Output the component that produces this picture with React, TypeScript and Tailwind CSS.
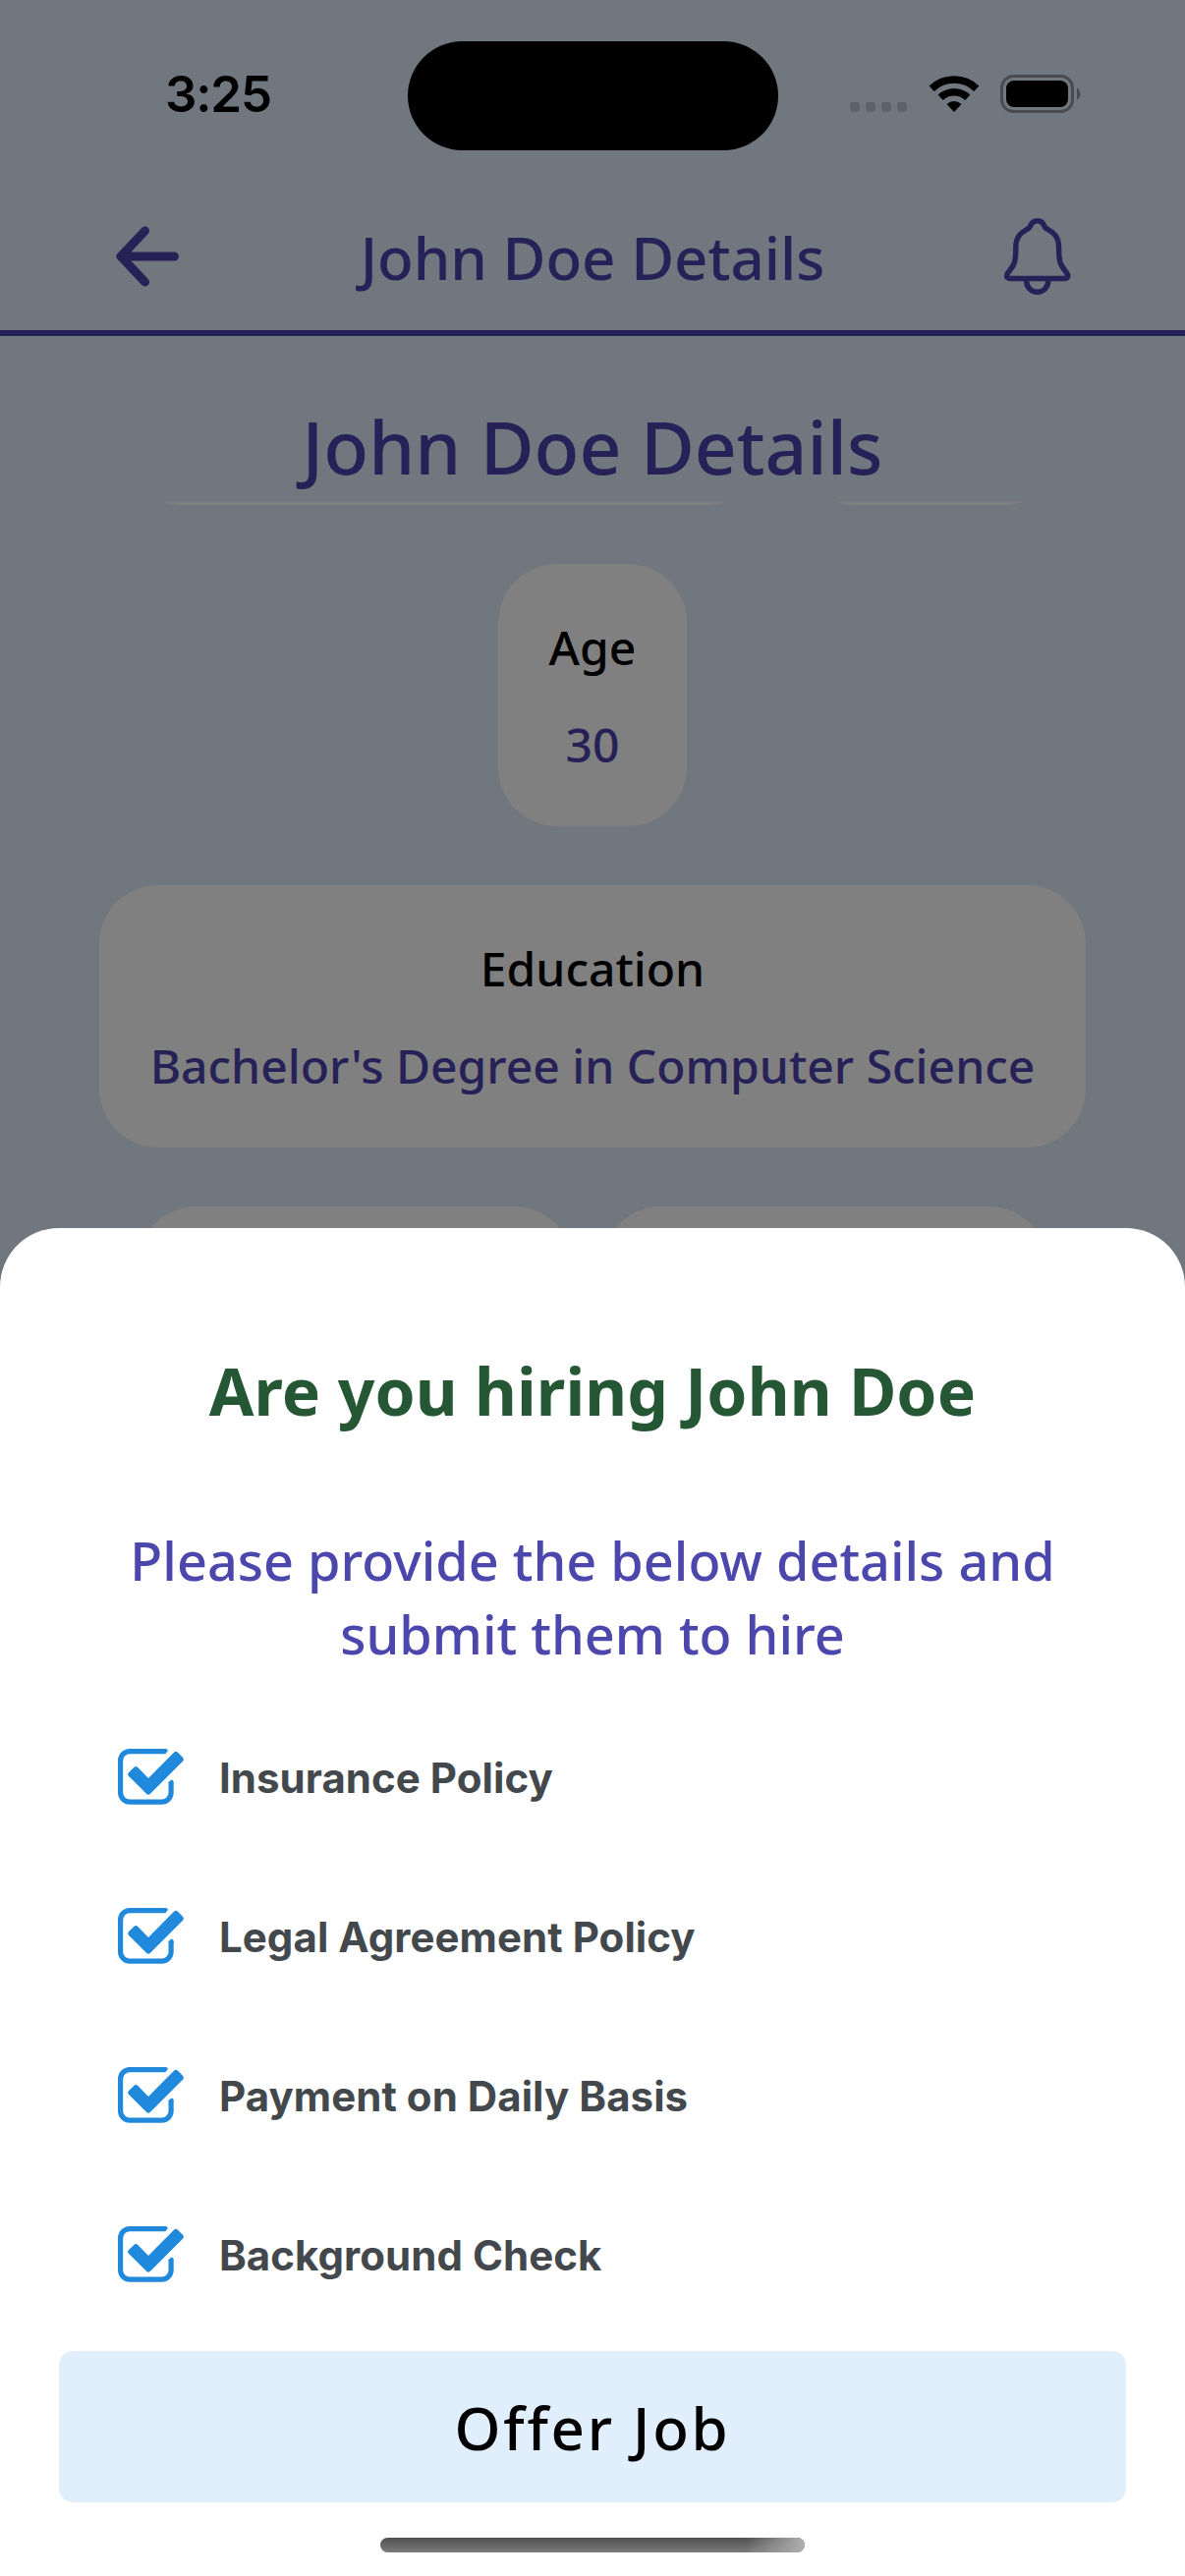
const checks = ["Insurance Policy", "Legal Agreement Policy", "Payment on Daily Basis", "Background Check"];

function CheckIcon() {
  return (
    <svg width="68" height="58" viewBox="0 0 68 58" className="shrink-0">
      <path d="M48.500 2.700H12A9.400 9.400 0 0 0 2.600 12.100V44.700A9.400 9.400 0 0 0 12 54.100H44.700A9.400 9.400 0 0 0 54.100 44.700V34" fill="none" stroke="#2089dc" strokeWidth="5.200" />
      <path d="M48 0.100Q51 0.200 50.800 2.200L48 5.300ZM51.500 35V34L54.500 31.500Q56.700 31.500 56.700 34V35Z" fill="#2089dc" />
      <path d="M10.900 24.200L16.300 19Q18.300 17.200 20.300 19L31 30L57 3.700Q59 2 61 3.700L66 8.700Q67.800 10.700 66 12.700L33 45.700Q31 47.600 29 45.700L10.900 27.800Q9.200 26 10.900 24.200Z" fill="#2089dc" />
    </svg>
  );
}

function InfoCard({ label, value }: { label: string; value: string }) {
  return (
    <div className="flex h-[267px] flex-col items-center rounded-[60px] bg-[#808080] px-[52px] pt-[35px] text-[48px] font-medium leading-[99px]">
      <div className="text-black">{label}</div>
      <div>{value}</div>
    </div>
  );
}

export default function App() {
  return (
    <div className="relative flex h-[2622px] w-[1206px] flex-col overflow-hidden bg-[#71777f] font-['Noto_Sans',sans-serif] text-[#262157]">
      <div className="flex h-[194px] items-start">
        <div className="mt-[65px] w-[415px] pl-[168px] font-['Inter',sans-serif] text-[51px] font-semibold leading-[62px] tracking-[-1.2px] text-black">3:25</div>
        <div className="mt-[41.500px] h-[111px] w-[377px] rounded-full bg-black" />
        <div className="ml-[73px] mt-[104px] flex gap-[6px]">
          {[0, 1, 2, 3].map((i) => <div key={i} className="h-[10px] w-[10px] rounded-[3px] bg-[#5e636b]" />)}
        </div>
        <svg width="52" height="38" viewBox="0 0 52 38" className="ml-[22px] mt-[77px]">
          <g fill="none" stroke="black" strokeWidth="7.500">
            <path d="M3.200 13.200A33 33 0 0 1 48.800 13.200" />
            <path d="M12.200 22.300A20 20 0 0 1 39.800 22.300" />
          </g>
          <path d="M18.500 29A11 11 0 0 1 33.500 29L26 37Z" />
        </svg>
        <svg width="84" height="40" viewBox="0 0 84 40" className="ml-[21px] mt-[76px]">
          <rect x="1.500" y="1.500" width="72" height="36" rx="12" fill="none" stroke="#484b4f" strokeWidth="3" />
          <rect x="6" y="6" width="63" height="27" rx="8" />
          <path d="M78 13.500A7 7 0 0 1 78 25.500Z" fill="#484b4f" />
        </svg>
      </div>
      <header className="flex h-[148px] items-center justify-between border-b-[6px] border-[#262157] pb-[8px] pl-[118px] pr-[115px]">
        <svg width="66" height="62" viewBox="0 0 66 62" fill="none" stroke="currentColor" strokeWidth="9" strokeLinecap="round" strokeLinejoin="round">
          <path d="M29.500 5L5 31L29.500 57M5 31H59.500" />
        </svg>
        <div className="pl-px pt-[2px] text-[60px] font-medium leading-[82px]">John Doe Details</div>
        <svg width="70" height="80" viewBox="0 0 70 80" fill="none" stroke="currentColor" strokeWidth="5.400" strokeLinejoin="round">
          <path d="M34.700 3.700C30.500 3.700 28.500 6.500 27.300 9.500C26.300 13.500 12.800 14 12.800 31C12.800 50 10 49 4.300 57.500Q2 62.500 7.500 62.500H61.900Q67.400 62.500 65.100 57.500C59.400 49 56.600 50 56.600 31C56.600 14 43.100 13.500 42.100 9.500C40.900 6.500 38.900 3.700 34.700 3.700Z" />
          <path d="M23.700 63V65.300A11 11 0 0 0 45.700 65.300V63" />
        </svg>
      </header>
      <h1 className="mt-[58px] h-[111px] text-center text-[75px] font-medium leading-[108px]">John Doe Details</h1>
      <div className="flex h-[3px] items-end justify-center gap-[30px] overflow-hidden">
        <div className="h-[120px] w-[656px] shrink-0 rounded-[60px] bg-[#808080]" />
        <div className="h-[120px] w-[273px] shrink-0 rounded-[60px] bg-[#808080]" />
      </div>
      <div className="mt-[60px] flex flex-col items-center gap-[60px]">
        <InfoCard label="Age" value="30" />
        <InfoCard label="Education" value="Bachelor's Degree in Computer Science" />
        <div className="flex gap-[30px]">
          <div className="h-[267px] w-[443px] rounded-[60px] bg-[#808080]" />
          <div className="h-[267px] w-[453px] rounded-[60px] bg-[#808080]" />
        </div>
      </div>

      <section className="absolute inset-x-0 bottom-0 flex h-[1372px] flex-col rounded-t-[60px] bg-white px-[60px]">
        <h2 className="mt-[120px] text-center text-[66px] font-bold leading-[90px] tracking-[0.1px] text-[#265735]">Are you hiring John Doe</h2>
        <p className="mt-[91px] px-[60px] text-center text-[54px] font-medium leading-[75px] text-[#4b47ad]">Please provide the below details and submit them to hire</p>
        <div className="mt-[79px] flex flex-col gap-[104px] pl-[60px]">
          {checks.map((c) => (
            <div key={c} className="flex h-[58px] items-center">
              <CheckIcon />
              <span className="ml-[35px] font-['Inter',sans-serif] text-[42px] font-bold leading-[51px] tracking-[0.05px] text-[#43484d]">{c}</span>
            </div>
          ))}
        </div>
        <button className="mt-[69px] h-[154px] rounded-[14px] bg-[#e1effd] pt-[2px] text-[60px] font-medium tracking-[2.7px] text-black">Offer Job</button>
        <div className="mx-auto mt-[36px] flex h-[15px] w-[432px] justify-end overflow-hidden rounded-full bg-linear-to-b from-[#505050] to-[#7c7c7c]">
          <div className="h-full w-[60px] bg-linear-to-r from-transparent to-[#b0b0b0]" />
        </div>
      </section>
    </div>
  );
}
